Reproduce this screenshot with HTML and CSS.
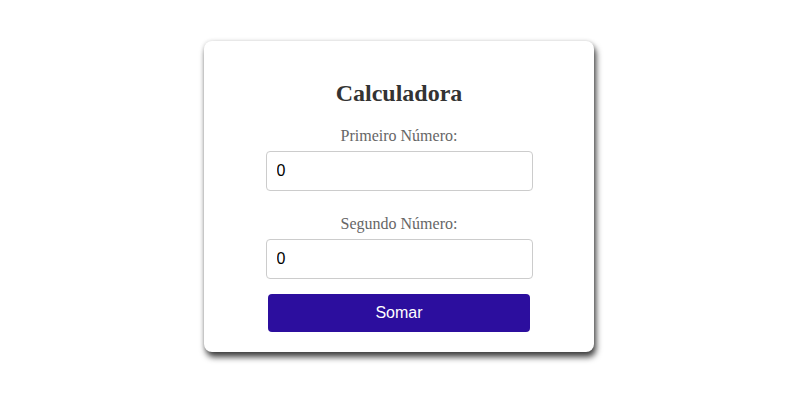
FILE: index.html
```html
<!DOCTYPE html>
<html>
<head>
<meta charset="utf-8">
<link rel="stylesheet" href="styles.css">
</head>
<body>
<div class="card">
  <h2 class="title">Calculadora</h2>
  <label class="label">Primeiro Número:</label>
  <input class="field" type="text" value="0">
  <label class="label second">Segundo Número:</label>
  <input class="field" type="text" value="0">
  <button class="btn">Somar</button>
</div>
</body>
</html>
```
FILE: styles.css
```css
html, body { margin: 0; padding: 0; background: #fff; }
body {
  display: flex;
  justify-content: center;
  align-items: flex-start;
  padding-top: 41px;
  min-height: 100vh;
  box-sizing: border-box;
  font-family: "Liberation Serif", serif;
}
.card {
  width: 390px;
  height: 311px;
  box-sizing: border-box;
  background: #fff;
  border-radius: 8px;
  box-shadow: 2px 5px 6px rgba(0,0,0,0.75), 0 0 4px rgba(0,0,0,0.15);
  padding: 20px 0;
  display: flex;
  flex-direction: column;
  align-items: center;
}
.title {
  margin: 18px 0 20px;
  font-size: 24px;
  line-height: 28px;
  color: #333;
  font-weight: bold;
}
.label {
  display: block;
  font-size: 16px;
  line-height: 18px;
  color: #666;
  margin-bottom: 6px;
}
.label.second { margin-top: 24px; }
.field {
  width: 267px;
  height: 40px;
  box-sizing: border-box;
  border: 1px solid #ccc;
  border-radius: 4px;
  padding: 0 10px;
  font-family: "Liberation Sans", sans-serif;
  font-size: 16px;
  color: #000;
  outline: none;
}
.btn {
  margin-top: 15px;
  width: 262px;
  height: 38px;
  border: none;
  border-radius: 4px;
  background: #2c0e9e;
  color: #fff;
  font-family: "Liberation Sans", sans-serif;
  font-size: 16px;
}
```
